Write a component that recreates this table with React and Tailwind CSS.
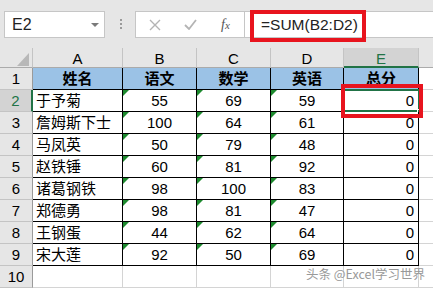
import React from "react";

const FONT = { fontFamily: '"Liberation Sans", "Noto Sans CJK SC", sans-serif' };

const header = ["姓名", "语文", "数学", "英语", "总分"];
const rows = [
  ["于予菊", "55", "69", "59", "0"],
  ["詹姆斯下士", "100", "64", "61", "0"],
  ["马凤英", "50", "79", "48", "0"],
  ["赵铁锤", "60", "81", "92", "0"],
  ["诸葛钢铁", "98", "100", "83", "0"],
  ["郑德勇", "98", "81", "47", "0"],
  ["王钢蛋", "44", "62", "64", "0"],
  ["宋大莲", "92", "50", "69", "0"],
];
const letters = ["A", "B", "C", "D", "E"];

function Tri() {
  return (
    <svg className="absolute left-0 top-0" width="6" height="6" viewBox="0 0 6 6">
      <polygon points="0,0 6,0 0,6" fill="#1d8a2e" />
    </svg>
  );
}

export default function App() {
  const cells = [];
  cells.push(
    <div key="corner" className="relative h-[20px] bg-[#e6e6e6] border-r border-r-[#c4c4c4] border-b border-b-[#ababab]">
      <svg className="absolute left-[17px] top-[5px]" width="12" height="13" viewBox="0 0 12 13">
        <polygon points="12,0 12,13 0,13" fill="#b8b8b8" />
      </svg>
    </div>
  );
  letters.forEach((l, i) => {
    const sel = i === 4;
    cells.push(
      <div
        key={"h" + l}
        className={
          sel
            ? "h-[20px] flex items-center justify-center bg-[#d3d3d3] text-[#217346] border-r border-r-[#c4c4c4] border-b-2 border-b-[#217346] text-[15px] leading-none pt-[2px]"
            : "h-[20px] flex items-center justify-center bg-[#e6e6e6] text-black border-r border-r-[#c4c4c4] border-b border-b-[#ababab] text-[15px] leading-none pt-[2px]"
        }
      >
        {l}
      </div>
    );
  });
  cells.push(<div key="hF" className="h-[20px] bg-[#e6e6e6] border-b border-b-[#ababab]" />);

  for (let r = 1; r <= 10; r++) {
    const selRow = r === 2;
    const cls = selRow
      ? "h-[22px] flex items-center justify-center bg-[#d3d3d3] text-[#217346] border-r-2 border-r-[#217346] border-b border-b-[#c4c4c4] text-[15px] leading-none"
      : "h-[22px] flex items-center justify-center bg-[#e6e6e6] text-black border-r border-r-[#9a9a9a] border-b border-b-[#c4c4c4] text-[15px] leading-none";
    cells.push(
      <div key={"rh" + r} className={cls}>
        {String(r)}
      </div>
    );
    for (let c = 0; c < 5; c++) {
      const key = "c" + r + "-" + c;
      if (r === 10) {
        cells.push(<div key={key} className="h-[22px] bg-white border-r border-r-[#d4d4d4] border-b border-b-[#d4d4d4]" />);
        continue;
      }
      if (r === 1) {
        cells.push(
          <div key={key} className="h-[22px] flex items-center justify-center bg-[#9bc2e6] border-r border-r-black border-b border-b-black font-bold text-[15px] leading-none text-black">
            {header[c]}
          </div>
        );
        continue;
      }
      const v = rows[r - 2][c];
      const align = c === 0 ? "justify-start pl-[3px]" : c === 4 ? "justify-end pr-[4px]" : "justify-center";
      cells.push(
        <div key={key} className={"relative h-[22px] flex items-center bg-white border-r border-r-black border-b border-b-black text-[15px] leading-none text-black " + align}>
          {c >= 1 && c <= 3 ? <Tri /> : null}
          {v}
          {r === 2 && c === 4 ? (
            <div className="absolute left-[-1px] top-[-1px] right-[-2px] bottom-[-1px] border-2 border-[#217346]">
              <div className="absolute right-[-4px] bottom-[-4px] w-[5px] h-[5px] bg-[#217346] border border-white" />
            </div>
          ) : null}
        </div>
      );
    }
    cells.push(<div key={"f" + r} className="h-[22px] bg-white border-b border-b-[#d4d4d4]" />);
  }

  return (
    <div className="relative w-[433px] h-[289px] overflow-hidden bg-white" style={FONT}>
      <div className="flex items-start h-[48px] bg-[#e6e6e6] pt-[11px]">
        <div className="ml-[4px] w-[101px] h-[27px] bg-white border border-[#c6c6c6] flex items-center justify-between pl-[7px] pr-[5px]">
          <span className="text-[16px] text-[#222]">E2</span>
          <svg width="8" height="4" viewBox="0 0 8 4">
            <polygon points="0,0 8,0 4,4" fill="#7a7a7a" />
          </svg>
        </div>
        <div className="ml-[15px] mt-[8px] flex flex-col gap-[2px]">
          <div className="w-[2px] h-[2px] bg-[#9a9a9a]" />
          <div className="w-[2px] h-[2px] bg-[#9a9a9a]" />
          <div className="w-[2px] h-[2px] bg-[#9a9a9a]" />
        </div>
        <div className="ml-[13px] w-[110px] h-[27px] bg-white border border-[#c6c6c6] flex items-center">
          <svg className="ml-[13px]" width="12" height="12" viewBox="0 0 12 12">
            <path d="M1 1 L11 11 M11 1 L1 11" stroke="#b4b4b4" strokeWidth="1.4" fill="none" />
          </svg>
          <svg className="ml-[23px]" width="13" height="11" viewBox="0 0 13 11">
            <path d="M1 6 L5 10 L12 1" stroke="#b4b4b4" strokeWidth="1.8" fill="none" />
          </svg>
          <span className="ml-[24px] text-[14px] italic text-[#555]" style={{ fontFamily: '"Liberation Serif", serif' }}>
            f<span className="text-[11px]">x</span>
          </span>
        </div>
        <div className="flex-1 h-[27px] bg-white border-y border-[#c6c6c6] flex items-center pl-[16px]">
          <span className="text-[15.5px] text-[#222]">=SUM(B2:D2)</span>
        </div>
      </div>
      <div className="grid grid-cols-[33px_90px_74px_74px_73px_75px_1fr]">
        {cells}
      </div>
      <div className="absolute left-[250px] top-[10px] w-[116px] h-[32px] border-[4px] border-[#e8141e]" />
      <div className="absolute left-[341px] top-[84px] w-[82px] h-[34px] border-[4px] border-[#e8141e]" />
      <div className="absolute right-[8px] bottom-[5px] text-[12.5px] text-[#999]" style={{ fontFamily: '"Noto Sans CJK SC", sans-serif' }}>
        头条 @Excel学习世界
      </div>
    </div>
  );
}
